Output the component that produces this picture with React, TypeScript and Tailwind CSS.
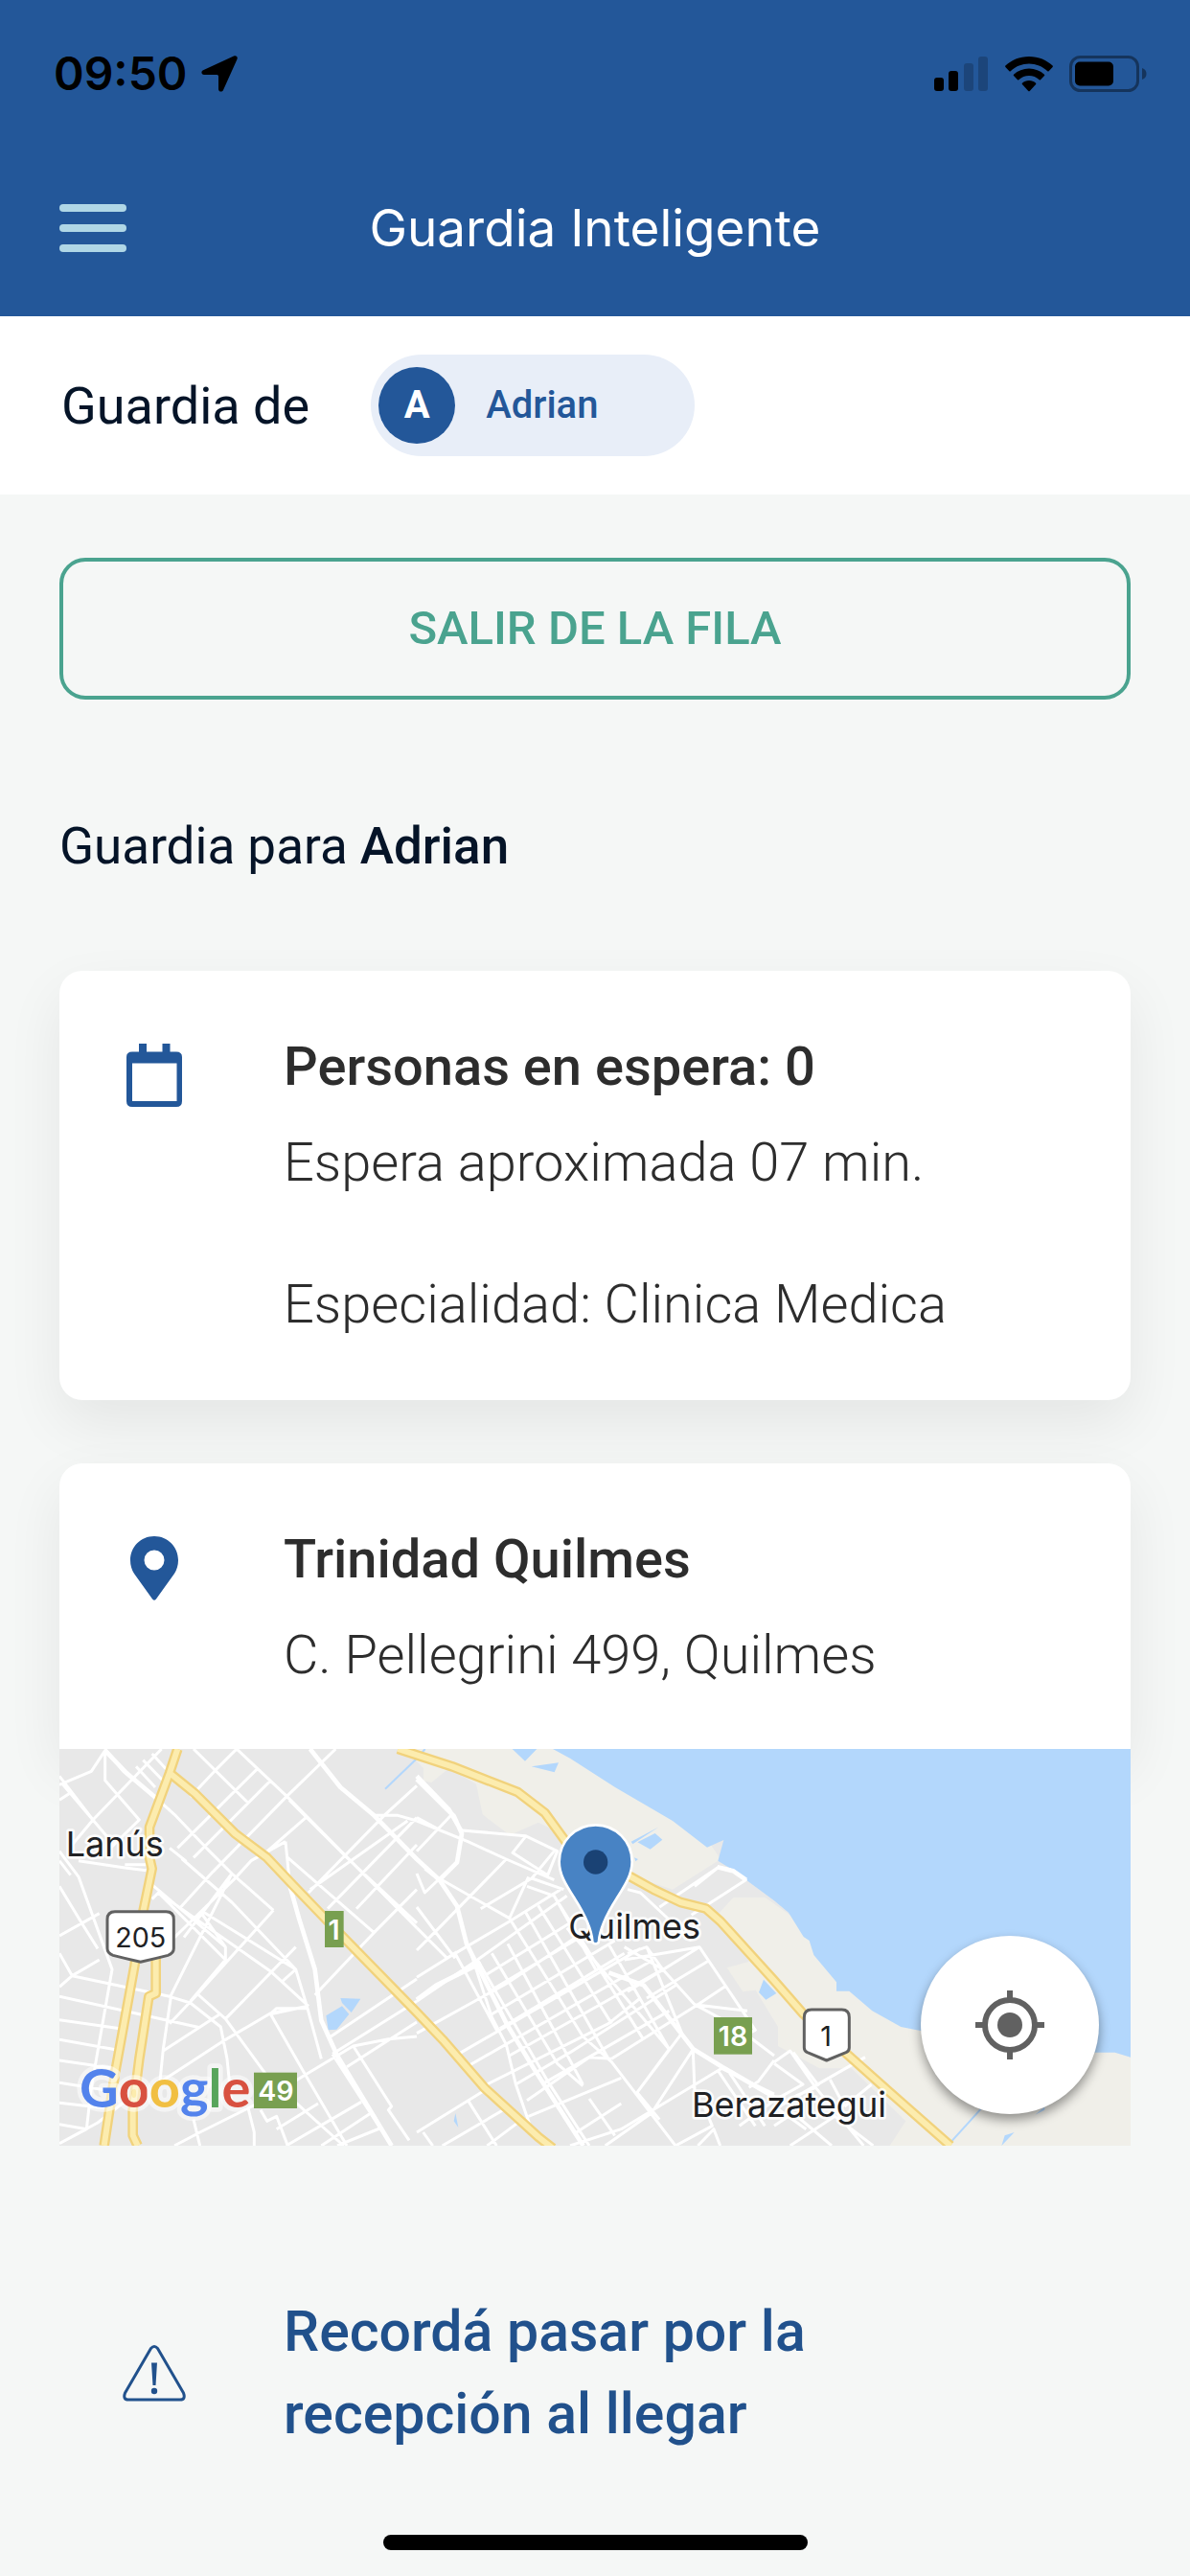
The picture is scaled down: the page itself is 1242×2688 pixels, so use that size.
import type { ReactNode } from "react";

const city = {
  west: [
    "M0 112L100 70L143 5V98L250 222L160 310",
    "M0 160L30 140M0 85L105 222L40 300M105 222L320 0",
    "M10 110L150 275",
    "M143 0L200 70L310 160L360 205L460 310L540 390L670 505",
    "M240 55L300 120M262 35L330 105M290 15L350 80",
    "M420 0L590 168M555 0L712 148L1119 560",
    "M555 0L490 65L410 150M620 62L370 310M660 100L420 340",
    "M720 160L905 345L1119 545M712 148L480 385L380 495",
    "M775 212L640 330",
    "M865 0L712 148M785 0L880 120L985 208L1119 345",
    "M980 208H1060L1119 225M1119 115L1020 205L780 450",
    "M1119 215L840 500M1090 225L785 440M1119 300L930 500",
    "M708 290L600 350L555 400M708 290L722 430",
    "M715 340L985 575M985 575L1119 440M985 575L800 770",
    "M0 350L35 395M0 320L60 400L165 690L100 1060L85 1190",
    "M60 350L205 372L272 380M205 362H272",
    "M0 430L70 545L120 625M0 585L125 515M0 640L40 710L125 660",
    "M0 745L40 710L345 775L410 795L505 870L525 970L540 1119",
    "M290 425L520 620L520 660M290 470L310 450L520 660L410 790",
    "M345 310L395 350L385 345L540 480L740 690L775 805L820 970",
    "M540 390L390 590M555 400L350 600M450 510L740 690",
    "M445 515L520 620M670 505L430 770L345 860",
    "M310 450L660 695L780 805M740 690L695 730",
    "M540 390L350 770L325 940L315 1040",
    "M0 775L440 872M0 848L190 875M0 910L180 942M0 975L170 1000",
    "M0 1045L160 1070M0 1108L150 1125M0 1175L85 1190L0 1235",
    "M430 765L520 845L655 1030L890 1242",
    "M325 945L500 832M320 1040L520 910L660 828L780 805",
    "M660 828L770 1020L900 1242",
    "M520 845L740 620M780 805L660 830L680 812H780",
    "M850 900L1119 720M855 955L1119 790M770 1020L920 930L1030 908L1119 900",
    "M770 1020L640 1100L440 1200L360 1242M920 930L1040 1119L1030 1130L1095 1225",
    "M900 995L1119 855M855 955L1040 1242",
    "M590 1120L610 1200V1242M420 1160L440 1242M630 1130L650 1165L680 1150L715 1242",
    "M680 1190L810 1110M710 1242L945 1105M820 1242L975 1140M870 1242L1010 1185",
    "M0 1235L120 1170L210 1100",
  ],
  centre: [
    "M0 225L160 290L280 345L430 410M0 320L110 205M0 215L75 255",
    "M142 255L340 272L440 320L410 395L300 325L340 275",
    "M430 320L360 405L200 500M280 345L70 560L0 630",
    "M0 390L25 450L125 355M25 375L70 410",
    "M70 405L290 530L390 690L520 900L610 980L810 1242",
    "M0 560L95 655L125 635M0 495L120 655M350 400L290 530",
    "M345 430L430 460L560 690M360 405L460 440",
    "M0 715L120 640L290 540L450 440M0 790L190 660L470 460",
    "M0 890L280 735L520 575M160 610L235 840L280 925L310 1050L355 1180",
    "M120 640L250 880M190 660L410 1040L540 1242",
    "M235 640L440 985L520 1055M285 610L520 1050M340 510L600 970",
    "M380 490L610 860M430 460L710 910M470 560L790 940",
    "M220 705L520 520M225 760L560 560M235 830L620 600",
    "M260 875L650 640M130 955L700 625M165 990L740 660",
    "M290 960L770 690M200 1060L600 860L700 780M310 1050L480 950L810 740",
    "M345 1100L540 965L610 970M610 970L880 800L970 740",
    "M350 1150L640 1030M400 1045L790 820M500 1200L640 1110",
    "M600 610L790 940L690 1075M720 620L830 890L690 1075L760 1160",
    "M650 620L770 690L870 800L1000 870L1119 960",
    "M660 640L720 620L770 690M650 660L885 620L1060 880L935 940",
    "M870 800L1035 820M865 945L870 1070M865 940L735 1140L590 1242",
    "M955 1000L640 1190L480 1242M955 1000L1119 1080M945 1010L1060 1180M970 1000L1090 1180",
    "M810 1242L925 1180L900 1119M880 1242L930 1190L950 1242",
    "M660 440L700 450L860 600M760 495L945 370L990 380L1030 410L860 520",
    "M945 370L870 430M0 1200L210 1070M160 1100L250 1242M20 1200L50 1242",
    "M80 1242L290 1119M220 1242L330 1160M540 1095L620 1210M1119 975L1070 1040L1040 1060",
    "M1119 1100L1010 1180M885 620L660 760M910 665L720 780",
  ],
  east: [
    "M0 980L50 945L130 1060L70 1085L0 1130M60 950L140 1055M0 985L90 1050L0 1100",
    "M75 1085L285 965M175 1035L220 1119M220 1119L305 1050",
    "M0 1119L100 1190M50 1242L190 1150L310 1242M130 1060L280 1242M0 1180L60 1140L180 1242",
  ],
};

// Main avenues, drawn wider than the street grid
const avenues = [
  "M143 5L210 75L310 160",
  "M785 0L880 120L985 208L1119 345L1190 410L1245 492L1275 610L1400 860L1485 1000L1640 1242",
  "M1119 95L1235 210L1260 265L1245 355L1185 415",
  "M722 430L750 530L800 690L820 850L870 960L1040 1242",
  "M1119 85L1220 190L1260 260",
  "M1119 785L1180 740L1320 670",
  "M1720 700L1830 740L1985 940L2075 995L2238 1090",
  "M2060 370L2110 382L2150 410",
];

const highways = [
  "M370 0L345 75L282 245V340L290 375L262 510L235 680L175 1010L140 1242",
  "M345 75L425 140L550 265L650 340L730 425L860 560L1119 825L1200 910L1330 1060L1500 1215L1545 1250",
  "M302 640V765L280 775L250 970L230 1130V1210L245 1242",
  "M1060 0L1230 55L1435 135L1520 200L1600 310",
  "M1770 390L1860 440L1945 480L2025 500L2070 540L2238 725L2330 830L2460 950L2600 1075L2790 1242",
];

function StreetMap() {
  return (
    <svg
      viewBox="0 0 3354 1242"
      preserveAspectRatio="xMidYMid slice"
      className="block h-[414px] w-full"
      role="img"
      aria-label="Mapa de Quilmes"
    >
      <rect width="3354" height="1242" fill="#e8e8e8" />
      <g fill="#f0efe9">
        <path d="M1080 0H1560L2040 300L2070 345L1920 440L1740 380L1600 280L1500 230L1410 270L1325 205L1305 110L1220 60L1165 105L1140 100V60Z" />
        <path d="M2060 520L2110 465L2210 465L2400 600L2520 700L3354 900V1242H2600L2650 1165L2480 1000L2380 1000L2250 930V870L2180 755L2140 760L2090 685L2160 665Z" />
      </g>
      <path
        fill="#b3d7fc"
        d="M1545 0L1600 30L1740 120L1920 225L2028 308L2080 285L2062 350L2110 380L2238 475L2283 512L2330 588L2348 600L2362 645L2433 730V758H2473L2545 820L2635 870L2700 883L3240 950H3305L3354 965V0Z"
      />
      <g fill="#b3d7fc">
        <path d="M835 835L885 805L907 830L868 878L842 880ZM880 780L943 782L914 825L885 795Z" />
        <path d="M1418 0H1495L1458 38ZM1478 55L1563 43L1550 73Z" />
        <path d="M1810 292L1865 264L1888 284L1850 314ZM1790 290L1875 245L1795 298ZM1800 340L1812 345L1804 352Z" />
        <path d="M2205 722L2245 765L2212 785L2190 762Z" />
        <path d="M1240 1140L1249 1185L1235 1165ZM3055 1145L3085 1120V1130ZM2960 1210L2990 1200L2950 1242Z" />
      </g>
      <g fill="none" stroke="#b3d7fc" strokeWidth="6">
        <path d="M1020 125L1119 30L1145 0M2790 1232L2885 1127" />
      </g>
      <g fill="none" stroke="#fff" strokeWidth="9" strokeLinejoin="round">
        <path d={city.west.join("")} />
        <path d={city.centre.join("")} transform="translate(1119 0)" />
        <path d={city.east.join("")} transform="translate(2238 0)" />
        <path d={avenues.join("")} strokeWidth="14" />
      </g>
      <g fill="none" strokeLinejoin="round">
        <path d={highways.join("")} stroke="#f1d27c" strokeWidth="32" />
        <path d={highways.join("")} stroke="#fcecae" strokeWidth="18" />
      </g>

      <g
        className="font-['Inter',sans-serif]"
        fontSize="108"
        fill="#202124"
        stroke="#fff"
        strokeOpacity="0.85"
        strokeWidth="16"
        strokeLinejoin="round"
        paintOrder="stroke"
      >
        <text x="20" y="336">Lanús</text>
        <text x="1594" y="593">Quilmes</text>
        <text x="1980" y="1151">Berazategui</text>
      </g>

      <g fill="#fff" stroke="#616161" strokeWidth="9" strokeLinejoin="round">
        <path d="M174 509H334Q358 509 358 533V625Q358 640 340 646Q300 656 254 667Q208 656 168 646Q150 640 150 625V533Q150 509 174 509Z" />
        <path d="M2355 816H2450Q2473 816 2473 840V935Q2473 945 2463 950L2402 975L2342 950Q2332 945 2332 935V840Q2332 816 2355 816Z" />
      </g>
      <g fill="#789f50">
        <rect x="831" y="507" width="59" height="114" />
        <rect x="609" y="1013" width="135" height="112" />
        <rect x="2049" y="840" width="120" height="116" />
      </g>
      <g className="font-['Inter',sans-serif]" fontSize="86" textAnchor="middle" fill="#202124">
        <text x="254" y="622">205</text>
        <text x="2400" y="930">1</text>
        <g fill="#fff" fontWeight="600">
          <text x="860" y="596">1</text>
          <text x="678" y="1101">49</text>
          <text x="2109" y="930">18</text>
        </g>
      </g>

      <text
        x="63"
        y="1122"
        className="font-['Lato',sans-serif]"
        fontSize="168"
        fontWeight="700"
        stroke="#fff"
        strokeOpacity="0.5"
        strokeWidth="28"
        strokeLinejoin="round"
        paintOrder="stroke"
      >
        <tspan fill="#5383ec">G</tspan>
        <tspan fill="#d85140">o</tspan>
        <tspan fill="#f1bf42">o</tspan>
        <tspan fill="#5383ec">g</tspan>
        <tspan fill="#58a55c">l</tspan>
        <tspan fill="#d85140">e</tspan>
      </text>

      <path
        d="M1679 238C1743 238 1793 290 1793 353C1793 393 1772 425 1745 468C1715 515 1692 560 1689 602Q1688 610 1679 610Q1670 610 1669 602C1666 560 1643 515 1613 468C1586 425 1565 393 1565 353C1565 290 1615 238 1679 238Z"
        fill="#4883c4"
        stroke="#fff"
        strokeWidth="8"
      />
      <circle cx="1679" cy="354" r="38" fill="#1a4274" />
    </svg>
  );
}

function StatusBar() {
  return (
    <div className="flex h-[154px] items-center justify-between pr-11 pl-14 text-black">
      <div className="flex items-center gap-[14px]">
        <span className="font-['Inter',sans-serif] text-[48px] leading-none font-semibold">09:50</span>
        <svg viewBox="0 0 38 38" className="size-[38px]" fill="currentColor" aria-hidden>
          <path d="M34 0.6C36.600-.5 38.500 1.400 37.400 4L23 36C21.900 38.600 18 37.800 18 35V21.500Q18 20 16.500 20H3C.2 20-.6 16.400 2 15.200Z" />
        </svg>
      </div>
      <div className="flex items-center gap-[17px]">
        <svg viewBox="0 0 57 38" className="h-[38px] w-[57px]" fill="currentColor" aria-hidden>
          <rect y="23" width="10" height="14" rx="3" />
          <rect x="15" y="16" width="10" height="21" rx="3" />
          <rect x="31" y="8" width="10" height="29" rx="3" opacity="0.2" />
          <rect x="46" y="1" width="10" height="36" rx="3" opacity="0.2" />
        </svg>
        <svg viewBox="0 0 50 38" className="h-[38px] w-[50px]" fill="currentColor" aria-hidden>
          <path d="M25 1C35 1 43.500 4.800 49.600 10.600Q50.200 11.200 49.600 11.900L45.600 16.200Q45 16.800 44.300 16.200C39 11.300 32.300 8.500 25 8.500S11 11.300 5.700 16.200Q5 16.800 4.400 16.200L.4 11.900Q-.2 11.200 .4 10.600C6.500 4.800 15 1 25 1Z" />
          <path d="M25 13.500C31.200 13.500 36.700 15.800 41 19.700Q41.700 20.300 41 21L37 25.200Q36.400 25.800 35.700 25.200C32.800 22.600 29.100 21 25 21S17.200 22.600 14.300 25.200Q13.600 25.800 13 25.200L9 21Q8.300 20.300 9 19.700C13.300 15.800 18.800 13.500 25 13.500Z" />
          <path d="M25 26C27.700 26 30.200 27 32.100 28.700Q32.700 29.300 32.100 30L25.700 37Q25 37.700 24.300 37L17.900 30Q17.300 29.300 17.900 28.700C19.800 27 22.300 26 25 26Z" />
        </svg>
        <svg viewBox="0 0 82 38" className="h-[38px] w-[82px]" fill="currentColor" aria-hidden>
          <rect x="1.500" y="1.500" width="70" height="35" rx="10" fill="none" stroke="currentColor" strokeWidth="3" opacity="0.4" />
          <rect x="6" y="6.500" width="40" height="25" rx="5" />
          <path d="M76 13C79 14 80.500 16.300 80.500 19S79 24 76 25Z" opacity="0.4" />
        </svg>
      </div>
    </div>
  );
}

function CalendarIcon() {
  return (
    <svg viewBox="0 0 58 66" className="h-[66px] w-[58px]" fill="currentColor" fillRule="evenodd" aria-hidden>
      <path d="M13 0H21V8.500H37.500V0H45.500V8.500H52Q58 8.500 58 14V60Q58 66 52 66H6Q0 66 0 60V14Q0 8.500 6 8.500H13ZM6 20.500V60H52.500V20.500Z" />
    </svg>
  );
}

function PinIcon() {
  return (
    <svg viewBox="0 0 50 67" className="h-[67px] w-[50px]" fill="currentColor" fillRule="evenodd" aria-hidden>
      <path d="M25 0C39 0 50 11 50 25C50 30.500 48.500 35 46 39L27 65.500Q25 68 23 65.500L4 39C1.500 35 0 30.500 0 25C0 11 11 0 25 0ZM25 14.500A10.500 10.500 0 1 0 25 35.500A10.500 10.500 0 1 0 25 14.500Z" />
    </svg>
  );
}

function WarningIcon() {
  return (
    <svg viewBox="0 0 66 59" className="h-[59px] w-[66px]" fill="none" stroke="currentColor" aria-hidden>
      <path d="M29.500 3.500Q33 -.5 36.500 3.500L63.500 50Q66 57 60 57H6Q0 57 2.500 50Z" strokeWidth="3" strokeLinejoin="round" />
      <path d="M30 18.500H36L34.500 42H31.500Z" fill="currentColor" stroke="none" />
      <circle cx="33" cy="48" r="3.200" fill="currentColor" stroke="none" />
    </svg>
  );
}

function InfoCard({ icon, title, children, className }: { icon: ReactNode; title: string; children: ReactNode; className: string }) {
  return (
    <div className={`flex bg-white pt-[50px] text-[56px] leading-[100px] text-[#2d2d2d] shadow-[0_24px_60px_rgba(0,0,0,0.07)] ${className}`}>
      <div className="mr-9 flex w-[198px] shrink-0 justify-center pt-[26px] text-[#235799]">{icon}</div>
      <div>
        <h2 className="font-medium">{title}</h2>
        {children}
      </div>
    </div>
  );
}

export default function App() {
  return (
    <div className="flex min-h-screen flex-col bg-[#f5f7f6] font-['Roboto',sans-serif]">
      <header className="bg-[#235799]">
        <StatusBar />
        <div className="grid h-[176px] grid-cols-[1fr_auto_1fr] items-center px-[62px] pb-2">
          <button type="button" aria-label="Menú" className="flex w-[70px] flex-col gap-[13px]">
            <span className="h-2 rounded-full bg-[#b0d7e6]" />
            <span className="h-2 rounded-full bg-[#b0d7e6]" />
            <span className="h-2 rounded-full bg-[#b0d7e6]" />
          </button>
          <h1 className="font-['Inter',sans-serif] text-[53px] leading-none text-white">Guardia Inteligente</h1>
        </div>
      </header>

      <div className="flex h-[186px] items-center gap-16 bg-white px-16">
        <span className="text-[54px] text-[#051428]">Guardia de</span>
        <button type="button" className="flex h-[106px] w-[338px] items-center gap-8 rounded-full bg-[#e8eef8] pl-2 text-[#235799]">
          <span className="flex size-20 items-center justify-center rounded-full bg-[#235799] text-[40px] font-bold text-white">A</span>
          <span className="text-[40px] font-medium">Adrian</span>
        </button>
      </div>

      <main className="px-[62px] pt-[66px]">
        <button
          type="button"
          className="h-[148px] w-full rounded-[27px] border-4 border-[#4aa38f] text-[49px] font-medium text-[#4aa38f]"
        >
          SALIR DE LA FILA
        </button>

        <p className="mt-[117px] mb-[94px] text-[53px] leading-[72px] text-[#051428]">
          Guardia para <strong className="font-medium">Adrian</strong>
        </p>

        <InfoCard icon={<CalendarIcon />} title="Personas en espera: 0" className="mb-[66px] rounded-3xl pb-[50px]">
          <p className="font-light">Espera aproximada 07 min.</p>
          <p className="mt-12 font-light">Especialidad: Clinica Medica</p>
        </InfoCard>

        <InfoCard icon={<PinIcon />} title="Trinidad Quilmes" className="rounded-t-3xl pb-12">
          <p className="font-light">C. Pellegrini 499, Quilmes</p>
        </InfoCard>
        <div className="relative">
          <StreetMap />
          <button
            type="button"
            aria-label="Mi ubicación"
            className="absolute right-[33px] bottom-[33px] flex size-[186px] items-center justify-center rounded-full bg-white text-[#616161] shadow-[0_6px_12px_rgba(0,0,0,0.4)]"
          >
            <svg viewBox="0 0 72 72" className="size-[72px]" fill="currentColor" aria-hidden>
              <path d="M33 0H39V8H33ZM33 64H39V72H33ZM0 33H8V39H0ZM64 33H72V39H64Z" />
              <circle cx="36" cy="36" r="26" fill="none" stroke="currentColor" strokeWidth="6" />
              <circle cx="36" cy="36" r="13" />
            </svg>
          </button>
        </div>

        <div className="mt-[151px] flex items-center text-[#21518c]">
          <div className="mr-9 flex w-[198px] shrink-0 justify-center">
            <WarningIcon />
          </div>
          <p className="max-w-[640px] text-[59px] leading-[86px] font-medium">Recordá pasar por la recepción al llegar</p>
        </div>
      </main>

      <div className="mx-auto mt-auto mb-[27px] h-4 w-[443px] rounded-full bg-black" />
    </div>
  );
}
